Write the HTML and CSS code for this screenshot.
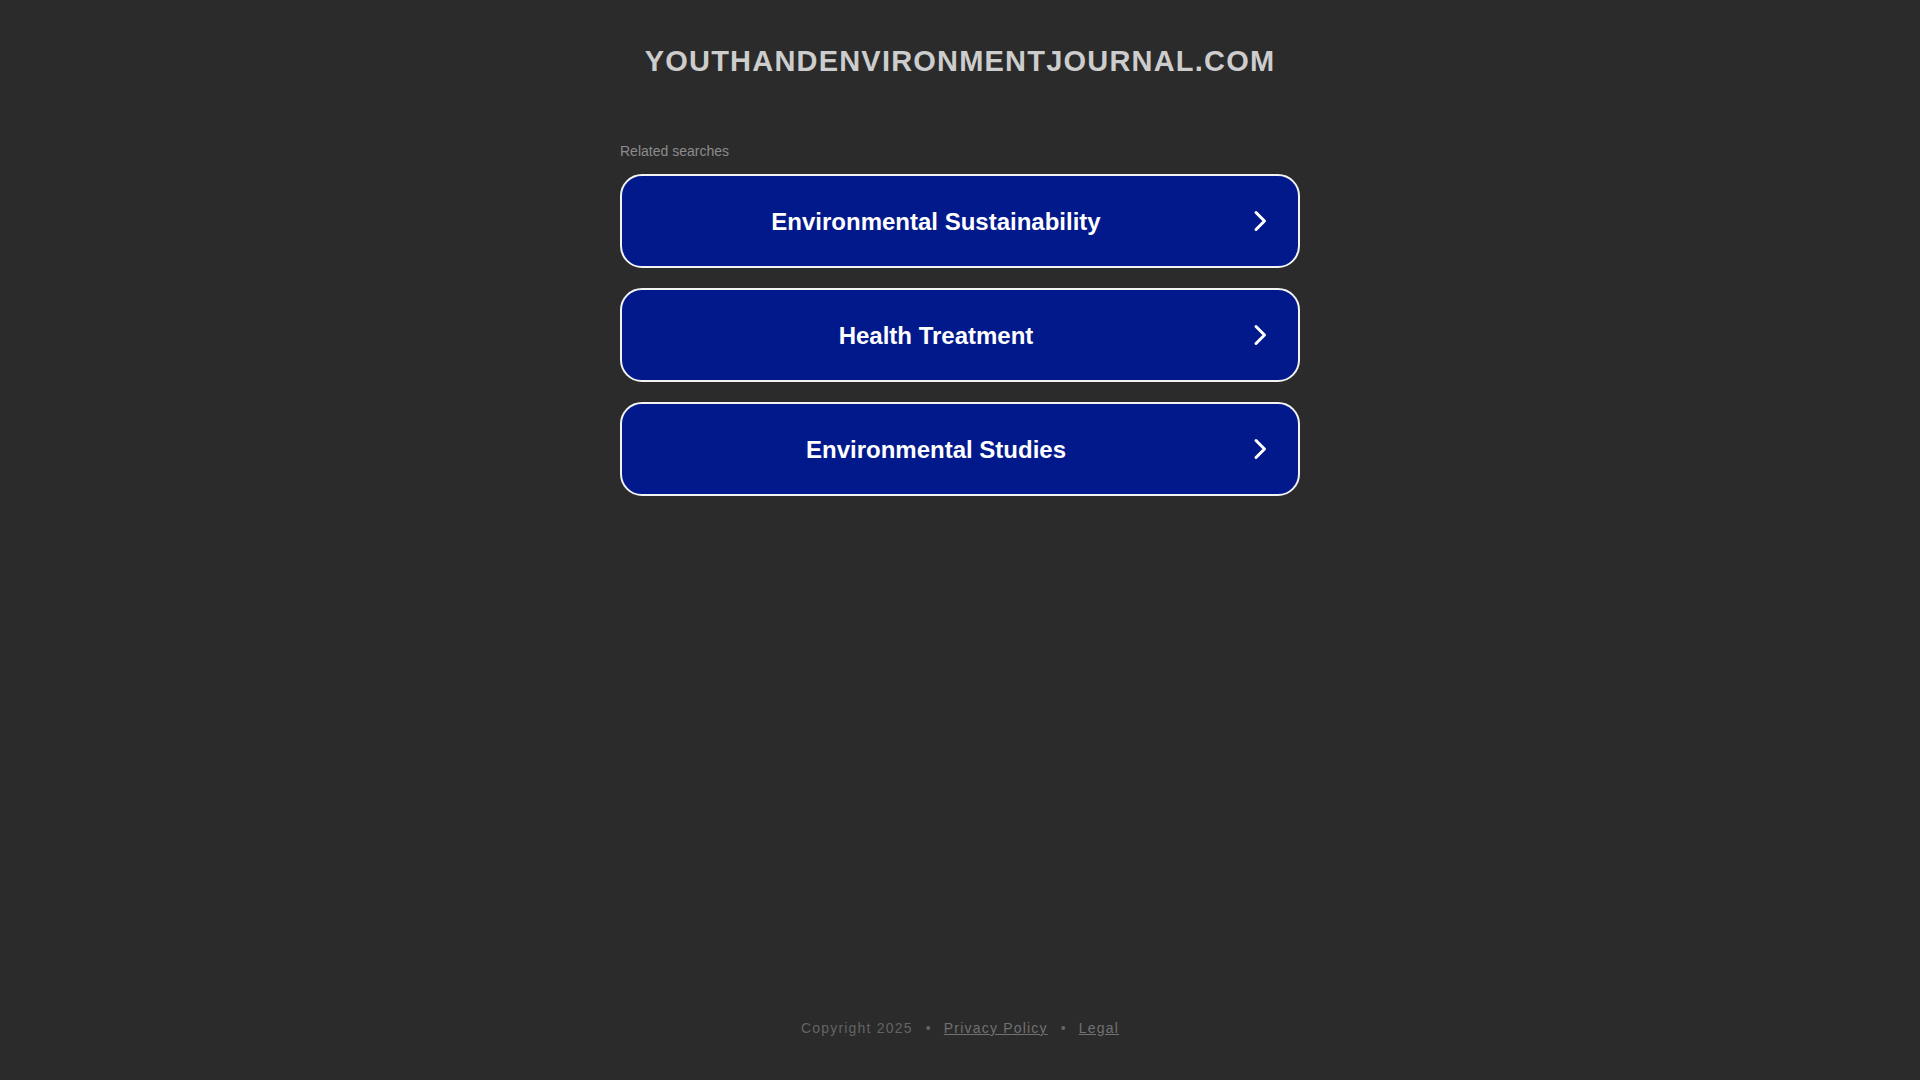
FILE: index.html
```html
<!DOCTYPE html>
<html lang="en">
<head>
<meta charset="utf-8">
<title>youthandenvironmentjournal.com</title>
<link rel="stylesheet" href="styles.css">
</head>
<body>
<div class="page">
  <header class="header">
    <h1 class="domain">youthandenvironmentjournal.com</h1>
  </header>
  <main class="main">
    <div class="related">Related searches</div>
    <a class="search-btn" href="#">
      <span class="search-text">Environmental Sustainability</span>
      <span class="search-arrow"><svg width="24" height="24" viewBox="0 0 24 24"><polyline points="8,3.5 16.5,12 8,20.5" fill="none" stroke="#fff" stroke-width="3" stroke-linecap="round" stroke-linejoin="round"/></svg></span>
    </a>
    <a class="search-btn" href="#">
      <span class="search-text">Health Treatment</span>
      <span class="search-arrow"><svg width="24" height="24" viewBox="0 0 24 24"><polyline points="8,3.5 16.5,12 8,20.5" fill="none" stroke="#fff" stroke-width="3" stroke-linecap="round" stroke-linejoin="round"/></svg></span>
    </a>
    <a class="search-btn" href="#">
      <span class="search-text">Environmental Studies</span>
      <span class="search-arrow"><svg width="24" height="24" viewBox="0 0 24 24"><polyline points="8,3.5 16.5,12 8,20.5" fill="none" stroke="#fff" stroke-width="3" stroke-linecap="round" stroke-linejoin="round"/></svg></span>
    </a>
  </main>
  <footer class="footer">
    <span>Copyright 2025</span><span class="sep">•</span><a class="footer-link" href="#">Privacy Policy</a><span class="sep">•</span><a class="footer-link" href="#">Legal</a>
  </footer>
</div>
</body>
</html>
```

FILE: styles.css
```css
html, body {
  margin: 0;
  padding: 0;
  background: #2b2b2b;
}

body {
  font-family: "Liberation Sans", Arial, sans-serif;
}

.page {
  min-height: 100vh;
  display: flex;
  flex-direction: column;
}

.header {
  padding-top: 43px;
  text-align: center;
}

.domain {
  margin: 0;
  font-size: 29px;
  line-height: 36px;
  font-weight: bold;
  letter-spacing: 1.2px;
  text-transform: uppercase;
  color: #cdcdcd;
}

.main {
  width: 680px;
  margin: 0 auto;
  padding-top: 64px;
  flex: 1;
}

.related {
  font-size: 14px;
  line-height: 16px;
  color: #8c8c8c;
  margin-bottom: 15px;
}

.search-btn {
  display: flex;
  align-items: center;
  box-sizing: border-box;
  height: 94px;
  margin-bottom: 20px;
  padding: 0 20px 0 8px;
  background: #02198b;
  border: 2px solid #f2f2f2;
  border-radius: 22px;
  text-decoration: none;
}

.search-text {
  flex: 1;
  padding-top: 2px;
  text-align: center;
  font-size: 24px;
  font-weight: bold;
  color: #ffffff;
}

.search-arrow {
  width: 36px;
  display: flex;
  justify-content: center;
  align-items: center;
}

.footer {
  padding-bottom: 42px;
  text-align: center;
  font-size: 14px;
  line-height: 20px;
  letter-spacing: 1.2px;
  color: #646464;
}

.sep {
  padding: 0 12px 0 13px;
}

.footer-link {
  color: #717171;
  text-decoration: underline;
}
```
